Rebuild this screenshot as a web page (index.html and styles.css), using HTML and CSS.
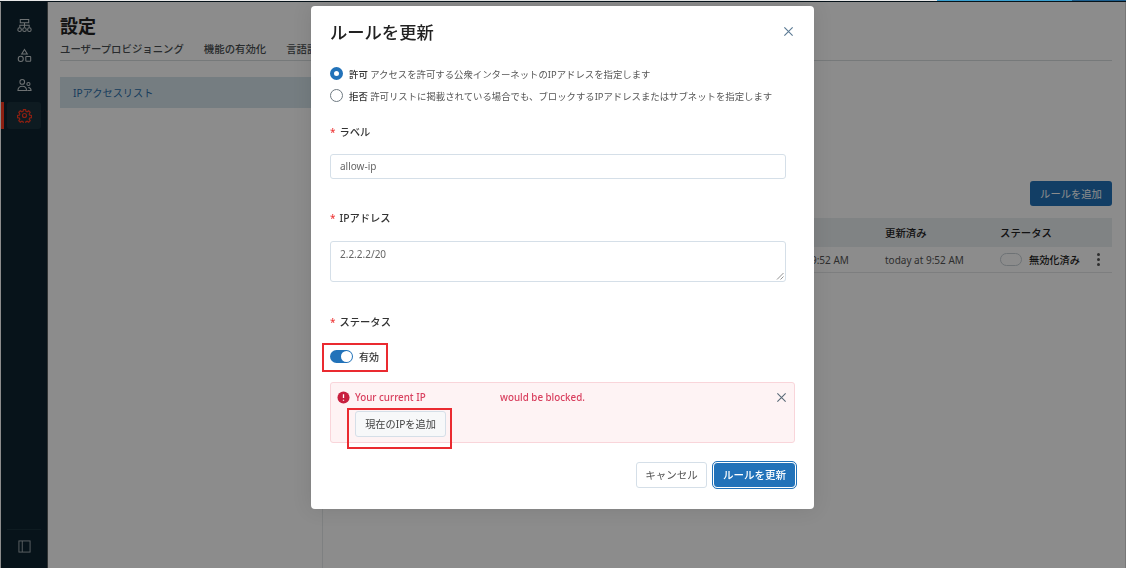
FILE: index.html
```html
<!DOCTYPE html>
<html lang="ja">
<head>
<meta charset="utf-8">
<title>ルールを更新</title>
<link rel="stylesheet" href="styles.css">
</head>
<body>
<div class="app">
  <aside class="sidebar">
    <nav class="side-top">
      <a class="side-item"><svg viewBox="0 0 16 16" class="ico"><path d="M3.5 1.5h9v3.6h-9zM8 5.1v2.7M3 10V7.8h10V10M8 7.8V10"/><circle cx="2.8" cy="12.4" r="1.9"/><circle cx="8" cy="12.4" r="1.9"/><circle cx="13.2" cy="12.4" r="1.9"/></svg></a>
      <a class="side-item"><svg viewBox="0 0 16 16" class="ico"><path d="M8 1.5l3 5H5z"/><circle cx="4" cy="11.6" r="2.7"/><rect x="9.4" y="9" width="5.2" height="5.2" rx=".6"/></svg></a>
      <a class="side-item"><svg viewBox="0 0 16 16" class="ico"><circle cx="5.6" cy="4.2" r="2.5"/><circle cx="12.2" cy="6.4" r="1.7"/><path d="M1 13.4c0-3 2-4.6 4.6-4.6s4.6 1.6 4.6 4.6zM11 13.4h4c0-2.2-1.1-3.3-3-3.3"/></svg></a>
      <a class="side-item active"><svg viewBox="0 0 24 24" class="ico"><circle cx="12" cy="12" r="3.2"/><path d="M10.3 2.5h3.4l.6 2.9 1.9.8 2.5-1.6 2.4 2.4-1.6 2.5.8 1.9 2.9.6v3.4l-2.9.6-.8 1.9 1.6 2.5-2.4 2.4-2.5-1.6-1.9.8-.6 2.9h-3.4l-.6-2.9-1.9-.8-2.5 1.6-2.4-2.4 1.6-2.5-.8-1.9-2.9-.6v-3.4l2.9-.6.8-1.9-1.6-2.5 2.4-2.4 2.5 1.6 1.9-.8z"/></svg></a>
    </nav>
    <div class="side-bottom">
      <svg viewBox="0 0 14 14" class="ico panel"><rect x="1" y="1" width="12" height="12"/><path d="M4.6 1v12"/></svg>
    </div>
  </aside>
  <main class="main">
    <h1 class="page-title">設定</h1>
    <div class="tabs">
      <span class="tab">ユーザープロビジョニング</span>
      <span class="tab">機能の有効化</span>
      <span class="tab">言語設定</span>
    </div>
    <div class="settings">
      <div class="subnav"><div class="subnav-item">IPアクセスリスト</div></div>
      <section class="panel-body">
        <div class="toolbar"><button class="btn-add">ルールを追加</button></div>
        <div class="table">
          <div class="row head"><span class="c1">作成済み</span><span class="c2">更新済み</span><span class="c3">ステータス</span></div>
          <div class="row"><span class="c1">today at 9:52 AM</span><span class="c2">today at 9:52 AM</span>
            <span class="c3 status"><i class="mini-toggle"></i><b>無効化済み</b></span>
            <span class="kebab"><i></i><i></i><i></i></span>
          </div>
        </div>
      </section>
    </div>
  </main>
</div>

<div class="overlay"></div>
<div class="top-edge"></div>

<div class="modal">
  <header class="modal-head">
    <h2>ルールを更新</h2>
    <svg viewBox="0 0 12 12" class="close"><path d="M1.5 1.5l9 9M10.5 1.5l-9 9"/></svg>
  </header>

  <div class="radios">
    <div class="radio-row"><i class="radio on"></i><span><b>許可</b> アクセスを許可する公衆インターネットのIPアドレスを指定します</span></div>
    <div class="radio-row"><i class="radio"></i><span><b>拒否</b> 許可リストに掲載されている場合でも、ブロックするIPアドレスまたはサブネットを指定します</span></div>
  </div>

  <div class="field field-label">
    <div class="label"><em>*</em>ラベル</div>
    <div class="input">allow-ip</div>
  </div>

  <div class="field field-ip">
    <div class="label"><em>*</em>IPアドレス</div>
    <div class="input area">2.2.2.2/20
      <svg viewBox="0 0 8 8" class="grip"><path d="M1 7.5L7.5 1M4.5 7.5L7.5 4.5"/></svg>
    </div>
  </div>

  <div class="field field-status">
    <div class="label"><em>*</em>ステータス</div>
    <div class="switch-row"><i class="switch"></i><b>有効</b></div>
  </div>

  <div class="alert">
    <div class="alert-line">
      <svg viewBox="0 0 14 14" class="alert-ico"><circle cx="7" cy="7" r="6.5"/><path d="M7 3.6v4M7 9.4v1.1"/></svg>
      <span class="alert-a">Your current IP</span><span class="alert-b">would be blocked.</span>
      <svg viewBox="0 0 12 12" class="alert-close"><path d="M1.5 1.5l9 9M10.5 1.5l-9 9"/></svg>
    </div>
    <button class="btn-ghost">現在のIPを追加</button>
  </div>

  <footer class="modal-foot">
    <button class="btn-cancel">キャンセル</button>
    <button class="btn-primary">ルールを更新</button>
  </footer>
</div>

<div class="mark mark-switch"></div>
<div class="mark mark-button"></div>
</body>
</html>
```
FILE: styles.css
```css
* { box-sizing: border-box; }
html, body { margin: 0; height: 100%; overflow: hidden; }
body {
  font-family: "Noto Sans", "Noto Sans CJK JP", sans-serif;
  background: #fff;
  color: #333;
  font-size: 11px;
}
b { font-weight: 500; }
i { display: block; }

.app { display: flex; height: 568px; border-top: 2px solid #0d2430; padding-left: 1px; }

.top-edge {
  position: fixed;
  left: 0;
  right: 0;
  top: 0;
  height: 1px;
  background: linear-gradient(90deg, #e8e8e8 0 937px, #3aa0d0 937px 1072px, #1d5f8f 1072px);
}

.sidebar {
  width: 47px;
  flex: none;
  background: #0d2430;
  display: flex;
  flex-direction: column;
  justify-content: space-between;
  border-right: 1px solid #5a5f62;
}
.side-top { display: flex; flex-direction: column; padding-top: 10px; gap: 3px; }
.side-item {
  display: flex;
  align-items: center;
  justify-content: center;
  width: 34px;
  height: 27px;
  margin-left: 6px;
  border-radius: 3px;
  position: relative;
}
.side-item .ico { width: 15px; height: 15px; fill: none; stroke: #c9cfd2; stroke-width: 1.1; }
.side-item.active { background: #1b323d; }
.side-item.active .ico { stroke: #ff3a20; stroke-width: 1.9; }
.side-item.active::before {
  content: "";
  position: absolute;
  left: -6px;
  top: 0;
  width: 3px;
  height: 27px;
  background: #ff3a20;
}
.side-bottom {
  margin: 0 6px;
  height: 39px;
  border-top: 1px solid #1b323d;
  display: flex;
  justify-content: center;
  align-items: flex-start;
  padding-top: 10px;
}
.panel { width: 13px; height: 13px; fill: none; stroke: #aab2b6; stroke-width: 1; }

.main { flex: 1; min-width: 0; padding: 12px 14px 0 12px; }
.page-title { margin: 0; font-size: 18px; line-height: 25px; font-weight: 700; color: #222; }
.tabs {
  display: flex;
  gap: 20px;
  height: 22px;
  border-bottom: 1px solid #d8dcdf;
  font-size: 10.4px;
  font-weight: 500;
  line-height: 20px;
  color: #4a4f52;
  white-space: nowrap;
}
.settings { display: flex; height: 510px; padding-top: 16px; }
.subnav { width: 263px; flex: none; border-right: 1px solid #e6e9eb; }
.subnav-item {
  height: 31px;
  background: #d6e3ec;
  color: #2a6ea8;
  font-size: 10.2px;
  line-height: 32px;
  padding-left: 13px;
}
.panel-body { flex: 1; padding: 104px 0 0 0; }
.toolbar { display: flex; justify-content: flex-end; }
.btn-add {
  width: 82px;
  height: 25px;
  border: 0;
  border-radius: 3px;
  background: #2272b9;
  color: #fff;
  font: inherit;
  font-size: 10.3px;
  padding: 0;
}
.table { margin-top: 12px; }
.row {
  display: flex;
  align-items: center;
  height: 26px;
  border-bottom: 1px solid #e3e6e8;
  color: #555;
  font-size: 10px;
  padding-left: 447px;
  white-space: nowrap;
}
.row.head { background: #eaeef1; border-bottom: 0; color: #222; font-weight: 500; height: 29px; font-size: 10.4px; }
.c1, .c2 { width: 115px; flex: none; }
.c3 { width: 97px; flex: none; }
.status { display: flex; align-items: center; gap: 7px; }
.status b { color: #222; font-size: 10.2px; }
.mini-toggle { width: 22px; height: 13px; border: 1px solid #c8d0d6; border-radius: 7px; }
.kebab { display: flex; flex-direction: column; gap: 2px; }
.kebab i { width: 3px; height: 3px; border-radius: 50%; background: #555; }

.overlay { position: fixed; inset: 0; background: rgba(0, 0, 0, .45); border-right: 1px solid rgba(0, 0, 0, .15); }

.modal {
  position: absolute;
  left: 311px;
  top: 6px;
  width: 503px;
  height: 503px;
  background: #fff;
  border-radius: 4px;
  padding: 0 19px;
  box-shadow: 0 0 20px rgba(0, 0, 0, .1);
  display: flex;
  flex-direction: column;
}
.modal-head {
  display: flex;
  justify-content: space-between;
  align-items: center;
  height: 50px;
}
.modal-head h2 { margin: 0; font-size: 17.3px; font-weight: 500; color: #222; }
.close { width: 11px; height: 11px; margin-right: 1px; fill: none; stroke: #5b7a94; stroke-width: 1.3; }

.radios { display: flex; flex-direction: column; gap: 3px; margin-top: 8px; }
.radio-row { display: flex; align-items: center; gap: 6px; height: 19px; font-size: 9.4px; color: #555; white-space: nowrap; }
.radio-row b { color: #333; }
.radio { width: 13px; height: 13px; border-radius: 50%; border: 1px solid #6f7a82; flex: none; }
.radio.on { border: 4.5px solid #2272b9; background: #fff; }

.field { padding-right: 9px; }
.label { font-size: 10.3px; line-height: 15px; padding-bottom: 1px; font-weight: 500; color: #333; }
.label em { color: #ee3b3b; font-style: normal; margin-right: 4px; font-size: 10px; }
.input {
  height: 25px;
  margin-top: 13px;
  border: 1px solid #d5dfe8;
  border-radius: 3px;
  padding: 0 9px;
  font-size: 10px;
  line-height: 23px;
  color: #666;
}
.input.area { height: 41px; margin-top: 14px; position: relative; line-height: 24px; }
.grip { position: absolute; right: 1px; bottom: 1px; width: 8px; height: 8px; fill: none; stroke: #777; stroke-width: .8; }
.field-label { margin-top: 20px; }
.field-ip { margin-top: 32px; }
.field-status { margin-top: 33px; }
.switch-row { display: flex; align-items: center; gap: 6px; margin-top: 18px; height: 14px; font-size: 10px; color: #333; }
.switch { width: 23px; height: 13px; border-radius: 7px; background: #2272b9; position: relative; }
.switch::after {
  content: "";
  position: absolute;
  right: 1px;
  top: 1px;
  width: 11px;
  height: 11px;
  border-radius: 50%;
  background: #fff;
}

.alert {
  margin-top: 19px;
  height: 61px;
  background: #fef3f4;
  border: 1px solid #f9d5da;
  border-radius: 3px;
  padding: 6px 7px 0 6px;
}
.alert-line { display: flex; align-items: center; height: 16px; color: #d9405f; font-size: 9.8px; font-weight: 500; white-space: nowrap; }
.alert-ico { width: 13px; height: 13px; margin-right: 5px; fill: #c8203f; stroke: #fff; stroke-width: 1.4; flex: none; }
.alert-ico circle { stroke: none; }
.alert-a { width: 145px; }
.alert-close { width: 11px; height: 11px; margin-left: auto; fill: none; stroke: #5b6b78; stroke-width: 1.2; }
.btn-ghost {
  display: block;
  margin: 6px 0 0 18px;
  width: 91px;
  height: 26px;
  border: 1px solid #d5dfe8;
  border-radius: 3px;
  background: #f7f8f9;
  color: #444;
  font: inherit;
  font-size: 10.2px;
  padding: 0 0 2px;
}

.modal-foot { display: flex; justify-content: flex-end; align-items: center; gap: 6px; margin-top: 19px; margin-right: -1px; }
.btn-cancel {
  width: 71px;
  height: 26px;
  background: #fff;
  border: 1px solid #d5dfe8;
  border-radius: 3px;
  color: #555;
  font: inherit;
  font-size: 10.5px;
  padding: 0 0 2px;
}
.btn-primary {
  width: 83px;
  height: 26px;
  background: #2272b9;
  border: 1px solid #fff;
  outline: 1px solid #2272b9;
  outline-offset: 0;
  border-radius: 4px;
  color: #fff;
  font: inherit;
  font-size: 10.5px;
  font-weight: 500;
  padding: 0 0 2px;
}

.mark { position: absolute; border: 2px solid #ea2a30; }
.mark-switch { left: 322px; top: 343px; width: 66px; height: 29px; }
.mark-button { left: 347px; top: 408px; width: 105px; height: 41px; }
```
